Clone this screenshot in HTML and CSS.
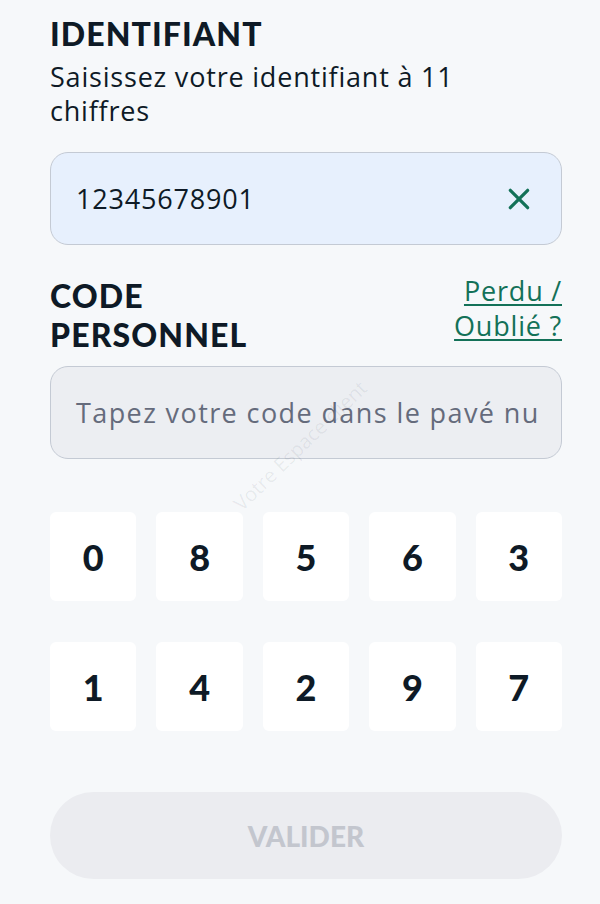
FILE: index.html
```html
<!DOCTYPE html>
<html lang="fr">
<head>
    <meta charset="UTF-8">
    <meta name="viewport" content="width=device-width, initial-scale=1.0">
    <title>Connexion</title>
    <link rel="stylesheet" href="styles.css">
</head>
<body>
    <main class="login">
        <!-- Identifiant -->
        <section class="field">
            <h2 class="field-title">IDENTIFIANT</h2>
            <p class="field-hint">Saisissez votre identifiant à 11<br>chiffres</p>
            <div class="input-box input-filled">
                <span class="input-value">12345678901</span>
                <button class="clear-btn" type="button" aria-label="Effacer">
                    <svg width="26" height="26" viewBox="0 0 24 24">
                        <path d="M4 4 L20 20 M20 4 L4 20" stroke="#137158" stroke-width="3" stroke-linecap="round" fill="none"/>
                    </svg>
                </button>
            </div>
        </section>

        <!-- Code personnel -->
        <section class="field field-code">
            <div class="field-head">
                <h2 class="field-title">CODE<br>PERSONNEL</h2>
                <a class="lost-link" href="#">Perdu /<br>Oublié ?</a>
            </div>
            <div class="input-box input-empty">
                <span class="input-placeholder">Tapez votre code dans le pavé nu</span>
            </div>
        </section>

        <div class="keypad">
            <button class="key" type="button">0</button>
            <button class="key" type="button">8</button>
            <button class="key" type="button">5</button>
            <button class="key" type="button">6</button>
            <button class="key" type="button">3</button>
            <button class="key" type="button">1</button>
            <button class="key" type="button">4</button>
            <button class="key" type="button">2</button>
            <button class="key" type="button">9</button>
            <button class="key" type="button">7</button>
        </div>

        <button class="submit-btn" type="button" disabled>VALIDER</button>

        <div class="watermark">Votre Espace client</div>
    </main>
</body>
</html>
```

FILE: styles.css
```css
body {
    margin: 0;
    padding: 0;
    background-color: #f6f8fa;
    font-family: "Open Sans", "Noto Sans", sans-serif;
    color: #0e1a26;
}

.login {
    position: relative;
    padding: 14px 38px 24px 50px;
    overflow: hidden;
}

.field-title {
    margin: 0;
    font-family: Lato, "Noto Sans", sans-serif;
    font-size: 32px;
    line-height: 39px;
    font-weight: 900;
    letter-spacing: 1.1px;
}

.field-hint {
    margin: 7px 0 0 0;
    font-size: 27px;
    line-height: 34px;
    letter-spacing: 0.8px;
}

.input-box {
    display: flex;
    align-items: center;
    height: 93px;
    margin-top: 24px;
    padding: 0 24px 0 25px;
    border: 1.5px solid #c4cad4;
    border-radius: 18px;
    box-sizing: border-box;
    font-size: 27px;
    letter-spacing: 0.8px;
}

.input-filled {
    background-color: #e7f0fd;
}

.input-value {
    flex: 1;
}

.clear-btn {
    border: none;
    background: none;
    padding: 0;
    width: 36px;
    height: 36px;
    display: flex;
    align-items: center;
    justify-content: center;
    cursor: pointer;
}

.field-code {
    margin-top: 31px;
}

.field-head {
    display: flex;
    justify-content: space-between;
    align-items: flex-start;
}

.lost-link {
    color: #137158;
    font-size: 27px;
    line-height: 35px;
    letter-spacing: 0.8px;
    text-align: right;
    text-decoration: underline;
    text-underline-offset: 3px;
    text-decoration-thickness: 1.5px;
    margin-top: -3px;
}

.field-code .input-box {
    margin-top: 12px;
}

.input-empty {
    background-color: #eceef2;
}

.input-placeholder {
    color: #656b7c;
    white-space: nowrap;
    letter-spacing: 1.4px;
}

.keypad {
    display: grid;
    grid-template-columns: repeat(5, 1fr);
    column-gap: 20px;
    row-gap: 41px;
    margin-top: 53px;
}

.key {
    height: 89px;
    border: none;
    border-radius: 6px;
    background-color: #ffffff;
    font-family: Lato, "Noto Sans", sans-serif;
    font-size: 36px;
    font-weight: 900;
    color: #0e1a26;
    cursor: pointer;
}

.submit-btn {
    display: block;
    width: 100%;
    height: 87px;
    margin-top: 61px;
    border: none;
    border-radius: 44px;
    background-color: #ebecf0;
    color: #c3c6ce;
    font-family: Lato, "Noto Sans", sans-serif;
    font-size: 28px;
    font-weight: 900;
}

.watermark {
    position: absolute;
    left: 190px;
    top: 432px;
    width: 220px;
    text-align: center;
    font-size: 20px;
    color: rgba(20, 30, 50, 0.07);
    transform: rotate(-44deg);
    pointer-events: none;
}
```
